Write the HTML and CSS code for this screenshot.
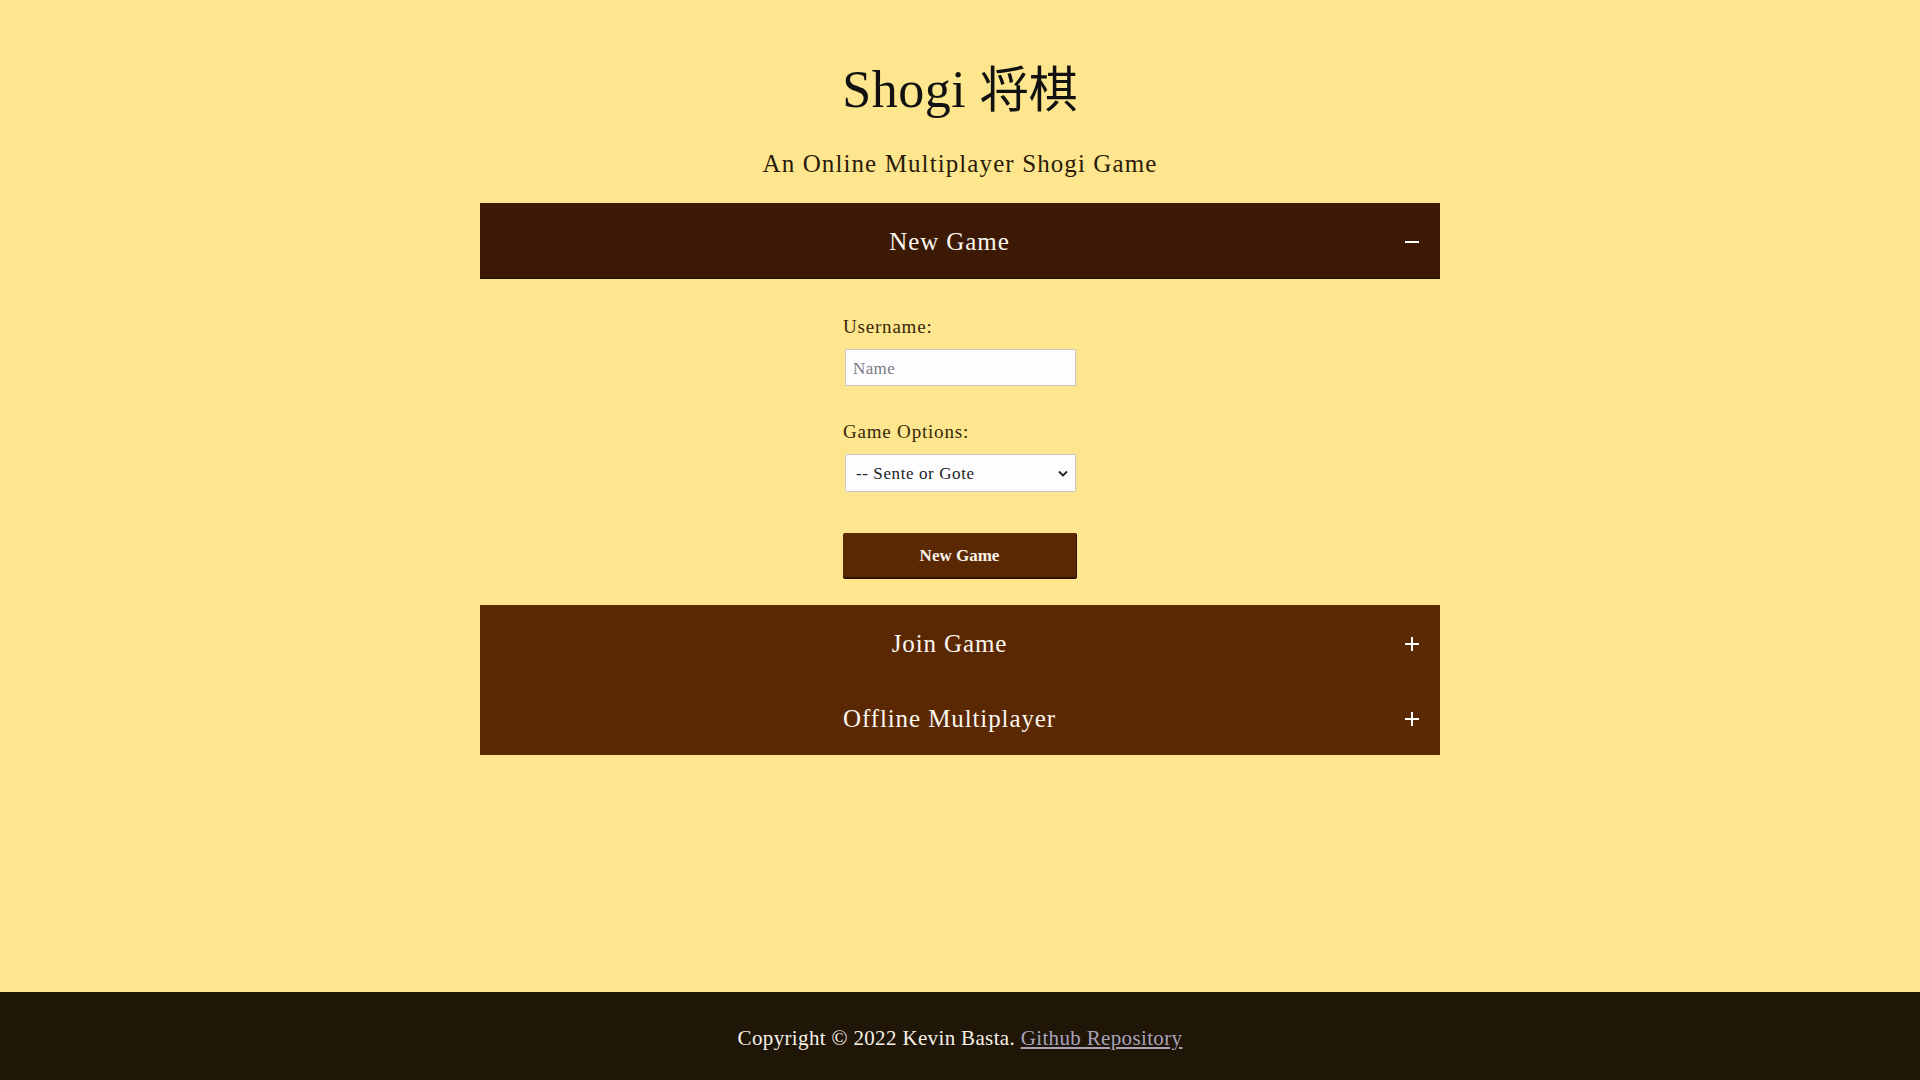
FILE: index.html
```html
<!DOCTYPE html>
<html lang="en">
<head>
<meta charset="utf-8">
<title>Shogi 将棋</title>
<link rel="stylesheet" href="styles.css">
</head>
<body>
<div class="page">
  <main class="main">
    <h1 class="title">Shogi <span class="cjk">将棋</span></h1>
    <p class="subtitle">An Online Multiplayer Shogi Game</p>
    <section class="accordion">
      <div class="acc-header acc-open">
        <span class="acc-title">New Game</span>
        <span class="acc-icon minus"></span>
      </div>
      <div class="acc-body">
        <form class="form">
          <label class="label" for="username">Username:</label>
          <input class="input" id="username" type="text" placeholder="Name">
          <label class="label label-gap" for="opts">Game Options:</label>
          <div class="select">
            <span class="select-text">-- Sente or Gote</span>
            <svg class="chev" width="10" height="7" viewBox="0 0 10 7"><path d="M1 1.5 L5 5.5 L9 1.5" fill="none" stroke="#222" stroke-width="1.8"/></svg>
          </div>
          <button class="btn" type="button">New Game</button>
        </form>
      </div>
      <div class="acc-group">
        <div class="acc-header">
          <span class="acc-title">Join Game</span>
          <span class="acc-icon plus"></span>
        </div>
        <div class="acc-header">
          <span class="acc-title">Offline Multiplayer</span>
          <span class="acc-icon plus"></span>
        </div>
      </div>
    </section>
  </main>
  <footer class="footer">
    <p class="foot-text">Copyright © 2022 Kevin Basta. <a class="foot-link" href="#">Github Repository</a></p>
  </footer>
</div>
</body>
</html>
```
FILE: styles.css
```css
* { box-sizing: border-box; }
html, body { margin: 0; padding: 0; }
body {
  background: #fde68e;
  font-family: "Liberation Serif", "Noto Sans CJK JP", serif;
  color: #1a1206;
}
.page {
  min-height: 100vh;
  display: flex;
  flex-direction: column;
}
.main {
  flex: 1;
  width: 960px;
  margin: 0 auto;
  display: flex;
  flex-direction: column;
}
.title {
  margin: 55px 0 0;
  font-size: 52px;
  line-height: 62px;
  height: 62px;
  font-weight: 400;
  text-align: center;
  color: #111;
  letter-spacing: 0.5px;
}
.cjk {
  font-family: "Noto Sans CJK JP", sans-serif;
  font-size: 49px;
  font-weight: 400;
  letter-spacing: 0;
}
.subtitle {
  margin: 32px 0 0;
  font-size: 25px;
  line-height: 29px;
  text-align: center;
  color: #2a1a08;
  letter-spacing: 1.1px;
}
.accordion {
  margin-top: 25px;
  display: flex;
  flex-direction: column;
}
.acc-header {
  height: 75px;
  display: flex;
  align-items: center;
  padding: 3px 21px 0 14px;
  background: #5a2904;
  color: #fbf6ee;
}
.acc-open {
  background: #3b1904;
  box-shadow: 0 1px 0 #1a0a00;
}
.acc-title {
  flex: 1;
  text-align: center;
  font-size: 25px;
  letter-spacing: 0.9px;
}
.acc-icon {
  width: 14px;
  height: 14px;
  position: relative;
}
.acc-icon::before {
  content: "";
  position: absolute;
  left: 0;
  right: 0;
  top: 6px;
  height: 2px;
  background: #fff;
}
.plus::after {
  content: "";
  position: absolute;
  top: 0;
  bottom: 0;
  left: 6px;
  width: 2px;
  background: #fff;
}
.acc-body {
  padding: 37px 0 26px;
  display: flex;
  justify-content: center;
}
.form {
  width: 234px;
  display: flex;
  flex-direction: column;
}
.label {
  font-size: 19px;
  line-height: 23px;
  color: #3a2608;
  margin-bottom: 11px;
  letter-spacing: 0.8px;
}
.label-gap { margin-top: 34px; }
.input {
  width: 231px;
  margin-left: 2px;
  height: 37px;
  border: 1px solid #c9c6cc;
  background: #fdfcff;
  padding: 2px 7px 0;
  font-family: "Liberation Serif", serif;
  font-size: 17px;
  letter-spacing: 0.4px;
  color: #333;
  outline: none;
}
.input::placeholder { color: #7a7a80; }
.select {
  width: 231px;
  margin-left: 2px;
  height: 38px;
  border: 1px solid #c9c6cc;
  background: #fdfcff;
  border-radius: 2px;
  display: flex;
  align-items: center;
  padding: 2px 7px 0 10px;
  font-size: 17px;
  letter-spacing: 0.6px;
  color: #222;
}
.select-text { flex: 1; }
.chev { margin-top: -2px; }
.btn {
  margin-top: 41px;
  height: 46px;
  width: 234px;
  padding-top: 3px;
  background: #5a2904;
  border: 0;
  border-right: 1px solid #2a1000;
  border-bottom: 2px solid #2a1000;
  border-radius: 2px;
  color: #fbf4ea;
  font-family: "Liberation Serif", serif;
  font-size: 17px;
  font-weight: 700;
}
.footer {
  height: 88px;
  background: #1f1608;
  display: flex;
  align-items: center;
  justify-content: center;
}
.foot-text {
  margin: 0;
  padding-top: 4px;
  font-size: 21px;
  letter-spacing: 0.35px;
  color: #f7f1e6;
}
.foot-link {
  color: #a9a2b8;
  text-decoration: underline;
}
```
